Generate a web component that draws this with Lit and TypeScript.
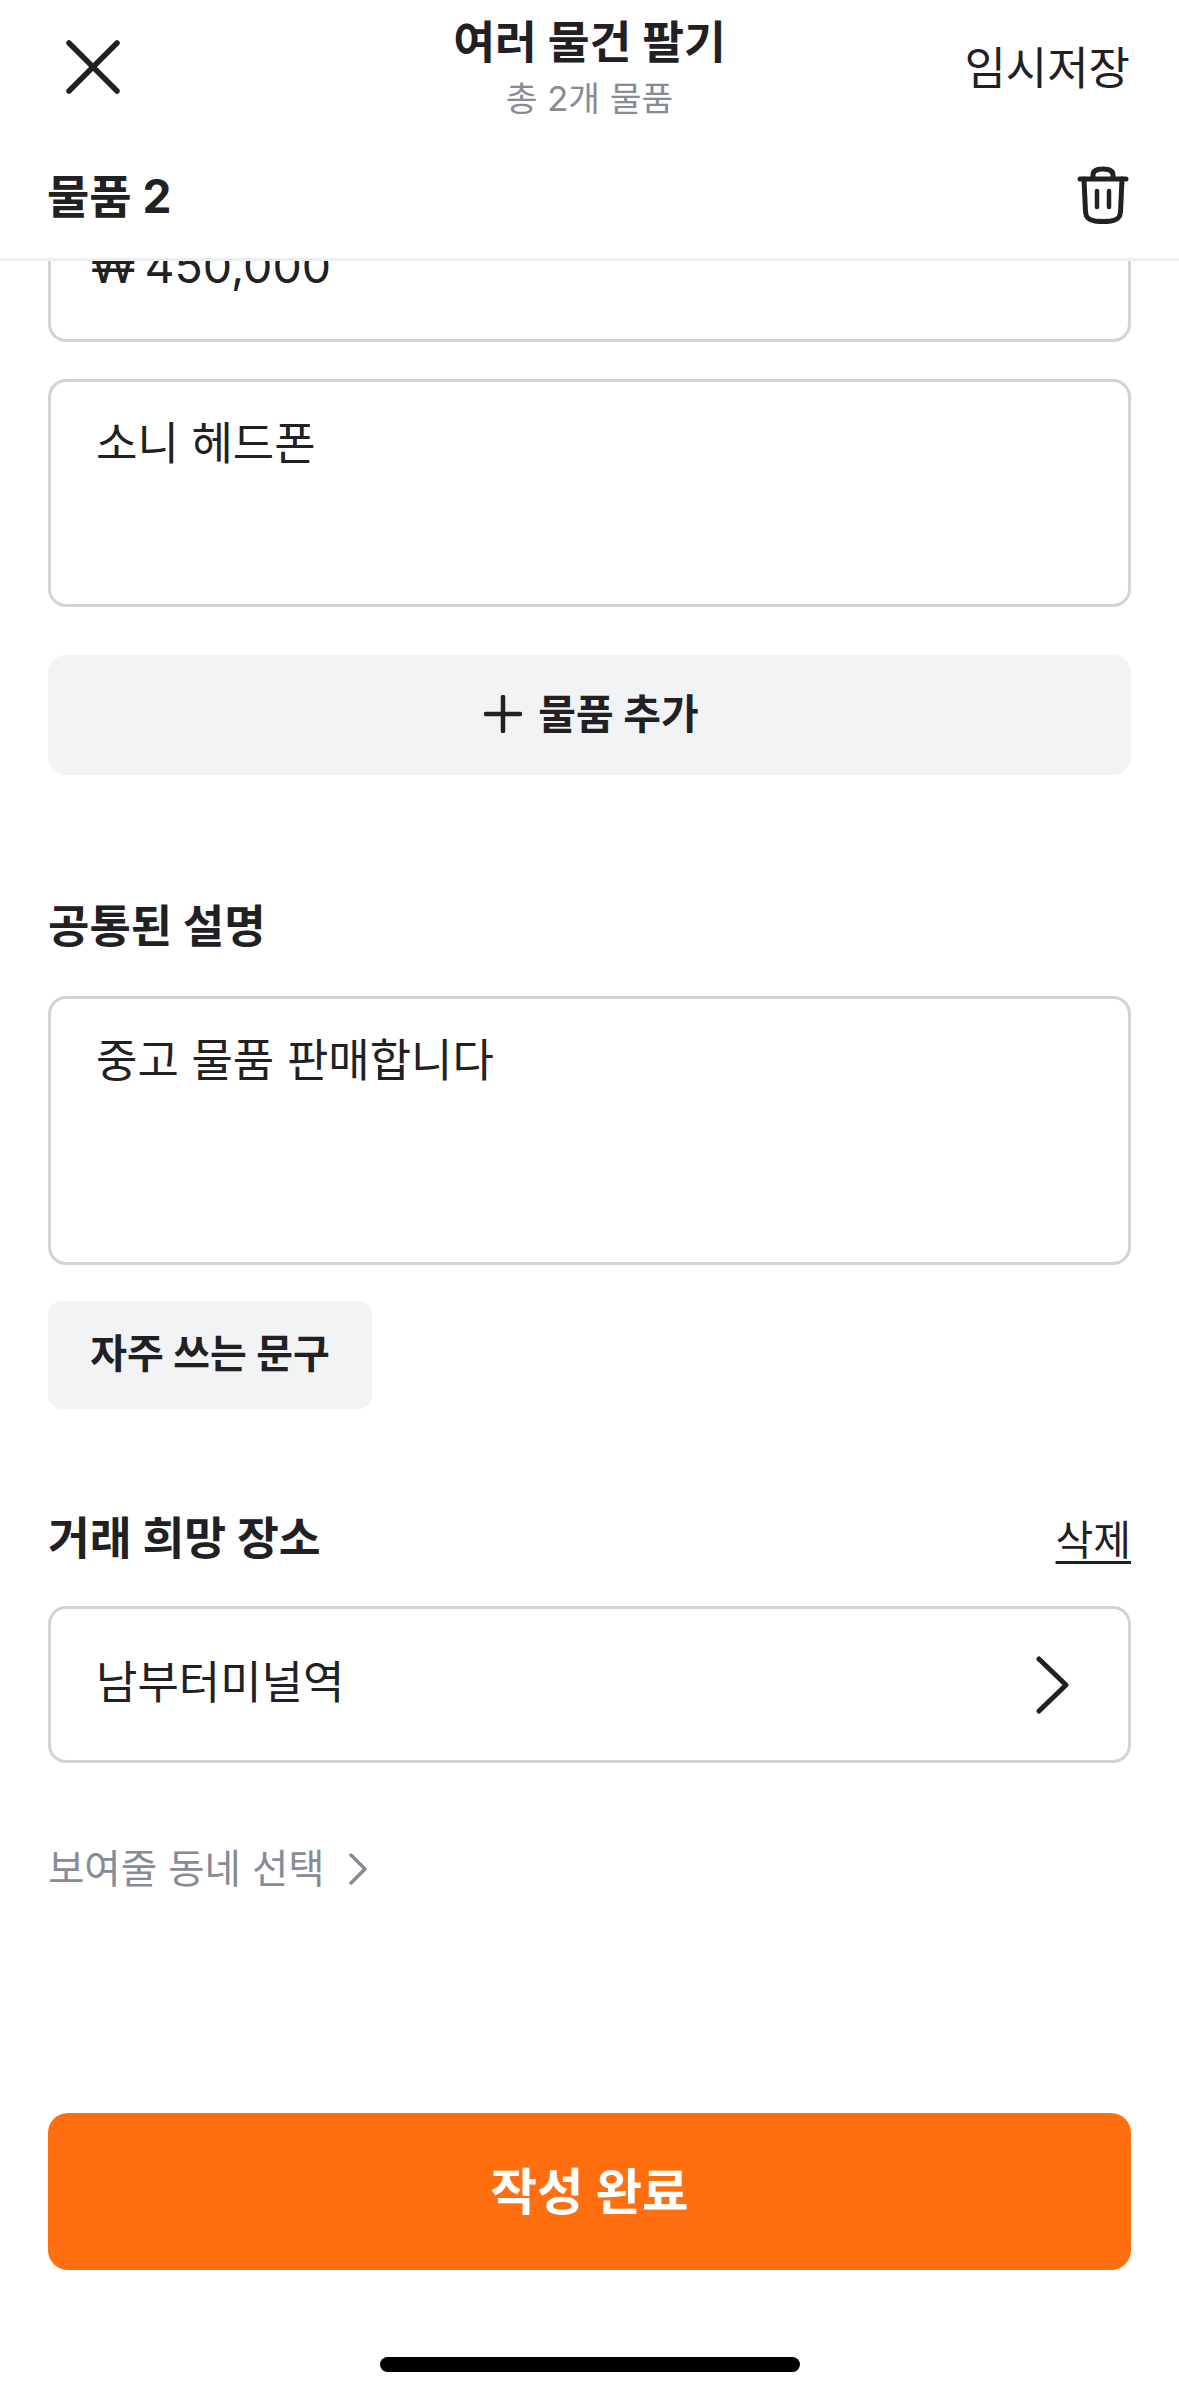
import { LitElement, html, css, svg } from "lit";
import { customElement } from "lit/decorators.js";

const chevron = svg`<path d="M3 3 L30 29 L3 55" fill="none" stroke="currentColor" stroke-linecap="round" stroke-linejoin="round"/>`;

@customElement("app-root")
export class AppRoot extends LitElement {
  static styles = css`
    :host {
      display: flex;
      flex-direction: column;
      width: 1179px;
      height: 2396px;
      background: #fff;
      color: #212124;
      font-family: Inter, "Noto Sans CJK KR", "Noto Sans", sans-serif;
      overflow: hidden;
    }
    * { box-sizing: border-box; }
    .nav {
      height: 132px;
      padding: 0 48px;
      display: grid;
      grid-template-columns: 1fr auto 1fr;
      align-items: center;
      flex: none;
    }
    .close { width: 54px; height: 54px; display: block; margin: 2px 0 0 18px; }
    .titles { display: flex; flex-direction: column; align-items: center; padding-top: 3px; }
    .title { font-size: 45.5px; font-weight: 700; line-height: 56px; }
    .sub { font-size: 34.5px; line-height: 44px; color: #868b94; margin-top: 6px; }
    .save { justify-self: end; font-size: 45px; line-height: 60px; margin: 5px 1px 0 0; }
    .itemhead {
      height: 129px;
      flex: none;
      padding: 0 50px 0 47px;
      display: flex;
      align-items: center;
      justify-content: space-between;
      border-bottom: 3px solid #eeeff1;
      font-size: 46px;
      font-weight: 700;
    }
    .itemhead span { margin-top: -4px; }
    .trash { width: 52px; height: 58px; display: block; }
    .body { flex: 1; padding: 0 48px; display: flex; flex-direction: column; min-height: 0; }
    .field {
      border: 3px solid #d1d3d8;
      border-radius: 18px;
      font-size: 45px;
      line-height: 60px;
      padding: 32px 45px;
    }
    .price {
      height: 81px;
      border-top: none;
      border-radius: 0 0 18px 18px;
      padding-top: 0;
      overflow: hidden;
      padding-left: 40px;
      font-size: 46.5px;
      word-spacing: -4px;
    }
    .price span { display: block; margin-top: -25px; }
    .name { height: 228px; margin-top: 37px; }
    .add {
      margin-top: 48px;
      height: 120px;
      border-radius: 18px;
      background: #f2f3f5;
      display: flex;
      align-items: center;
      justify-content: center;
      gap: 16px;
      padding-left: 4px;
      font-size: 41px;
      font-weight: 700;
    }
    .add span { margin-top: -8px; }
    .plus { width: 38px; height: 38px; display: block; margin-top: -2px; }
    .h { font-size: 45px; font-weight: 700; line-height: 60px; }
    .h1 { margin-top: 122px; }
    .desc { height: 269px; margin-top: 39px; }
    .phrase {
      margin-top: 36px;
      align-self: flex-start;
      width: 324px;
      height: 108px;
      border-radius: 14px;
      background: #f2f3f5;
      display: flex;
      align-items: center;
      justify-content: center;
      font-size: 40px;
      font-weight: 700;
    }
    .phrase span { margin-top: -8px; }
    .rowhead {
      margin-top: 99px;
      display: flex;
      justify-content: space-between;
      align-items: center;
    }
    .rowhead .h { font-size: 45.5px; }
    .del { font-size: 41px; line-height: 60px; margin-top: 2px; text-decoration: underline; text-underline-offset: 6px; text-decoration-thickness: 3px; }
    .place {
      height: 157px;
      margin-top: 36px;
      display: flex;
      align-items: center;
      justify-content: space-between;
      padding: 0 58px 0 45px;
    }
    .place span { margin-top: -3px; }
    .chev { width: 34px; height: 58px; display: block; stroke-width: 5px; }
    .hood {
      margin-top: 78px;
      display: flex;
      align-items: center;
      gap: 23px;
      font-size: 39.5px;
      line-height: 56px;
      color: #868b94;
    }
    .chev2 { width: 22px; height: 32px; display: block; }
    .foot { flex: none; padding: 0 48px; display: flex; flex-direction: column; align-items: center; }
    .submit {
      width: 100%;
      height: 157px;
      border-radius: 20px;
      background: #ff6f0f;
      color: #fff;
      font-size: 50.5px;
      font-weight: 700;
      display: flex;
      align-items: center;
      justify-content: center;
    }
    .submit span { margin-top: -7px; }
    .bar { width: 420px; height: 15px; border-radius: 8px; background: #000; margin-top: 87px; margin-bottom: 24px; }
  `;

  render() {
    return html`
      <div class="nav">
        <svg class="close" viewBox="0 0 54 54" fill="none" stroke="#212124" stroke-width="5.5" stroke-linecap="round">
          <path d="M3 3 L51 51 M51 3 L3 51" />
        </svg>
        <div class="titles">
          <div class="title">여러 물건 팔기</div>
          <div class="sub">총 2개 물품</div>
        </div>
        <div class="save">임시저장</div>
      </div>
      <div class="itemhead">
        <span>물품 2</span>
        <svg class="trash" viewBox="0 0 52 58" fill="none" stroke="#212124" stroke-width="5" stroke-linecap="round" stroke-linejoin="round">
          <path d="M3 13 H49" />
          <path d="M16 12 V9 C16 4.5 20 3 26 3 C32 3 36 4.5 36 9 V12" />
          <path d="M7 13 L8.5 46 C9 52 12 54 18 55 Q26 56 34 55 C40 54 43 52 43.5 46 L45 13" />
          <path d="M20 25 V41 M32 25 V41" stroke-width="4.5" />
        </svg>
      </div>
      <div class="body">
        <div class="field price"><span>₩ 450,000</span></div>
        <div class="field name">소니 헤드폰</div>
        <div class="add">
          <svg class="plus" viewBox="0 0 38 38" fill="none" stroke="#212124" stroke-width="4.5" stroke-linecap="round">
            <path d="M19 2 V36 M2 19 H36" />
          </svg>
          <span>물품 추가</span>
        </div>
        <div class="h h1">공통된 설명</div>
        <div class="field desc">중고 물품 판매합니다</div>
        <div class="phrase"><span>자주 쓰는 문구</span></div>
        <div class="rowhead">
          <div class="h">거래 희망 장소</div>
          <div class="del">삭제</div>
        </div>
        <div class="field place">
          <span>남부터미널역</span>
          <svg class="chev" viewBox="0 0 34 58">${chevron}</svg>
        </div>
        <div class="hood">
          <span>보여줄 동네 선택</span>
          <svg class="chev2" viewBox="0 0 22 32" fill="none" stroke="#868b94" stroke-width="3.5" stroke-linecap="round" stroke-linejoin="round">
            <path d="M3 2 L17 16 L3 30" />
          </svg>
        </div>
      </div>
      <div class="foot">
        <div class="submit"><span>작성 완료</span></div>
        <div class="bar"></div>
      </div>
    `;
  }
}
